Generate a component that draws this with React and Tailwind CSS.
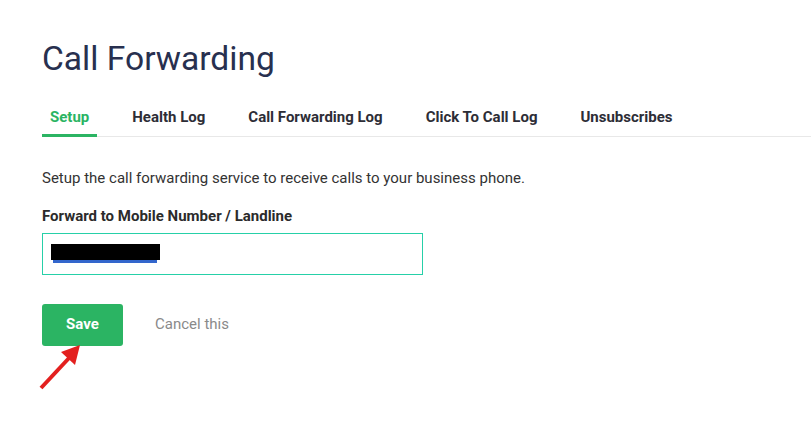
export default function App() {
  const tabs = ['Setup', 'Health Log', 'Call Forwarding Log', 'Click To Call Log', 'Unsubscribes'];

  return (
    <div className="relative w-[811px] h-[428px] overflow-hidden bg-white" style={{ fontFamily: 'Roboto, "Liberation Sans", sans-serif' }}>
      <div className="pl-[42px]">
        <h1 className="mt-[39px] text-[33.6px] leading-[40px] text-[#28304f] font-normal">Call Forwarding</h1>

        <div className="mt-[28px] flex border-b border-[#e8e8e8]">
          {tabs.map((tab, i) => (
            <div
              key={tab}
              className={`-mb-px px-[8px] pb-[7px] text-[15px] leading-[20px] font-bold border-b-[3px] ${
                i === 0 ? 'text-[#2bb463] border-[#2bb463]' : 'text-[#2d2d36] border-transparent'
              } ${i === 0 ? '' : 'ml-[27px]'}`}
            >
              {tab}
            </div>
          ))}
        </div>

        <p className="mt-[31px] text-[15px] leading-[20px] text-[#333]">
          Setup the call forwarding service to receive calls to your business phone.
        </p>

        <div className="mt-[18px] text-[15px] leading-[20px] font-bold text-[#2b2b2b]">
          Forward to Mobile Number / Landline
        </div>

        <div className="relative mt-[7px] w-[381px] h-[42px] border border-[#26d0a8]">
          <span className="absolute left-[10px] top-[11px] w-[104px] h-[18px] bg-[#3366cc]" />
          <span className="absolute left-[8px] top-[10px] w-[109px] h-[16px] bg-black" />
        </div>

        <div className="mt-[29px] flex items-center">
          <button className="w-[81px] h-[42px] rounded-[3px] bg-[#2bb463] text-white text-[15px] leading-[20px] font-bold pb-[2px]">
            Save
          </button>
          <span className="ml-[32px] mb-[3px] text-[15px] leading-[20px] text-[#8a8a8a]">Cancel this</span>
        </div>
      </div>

      <svg className="absolute left-0 top-0" width="811" height="428" viewBox="0 0 811 428">
        <line x1="41" y1="388" x2="70" y2="357" stroke="#e3201f" strokeWidth="4" />
        <polygon points="80,345 61,352 75,365" fill="#e3201f" />
      </svg>
    </div>
  );
}
